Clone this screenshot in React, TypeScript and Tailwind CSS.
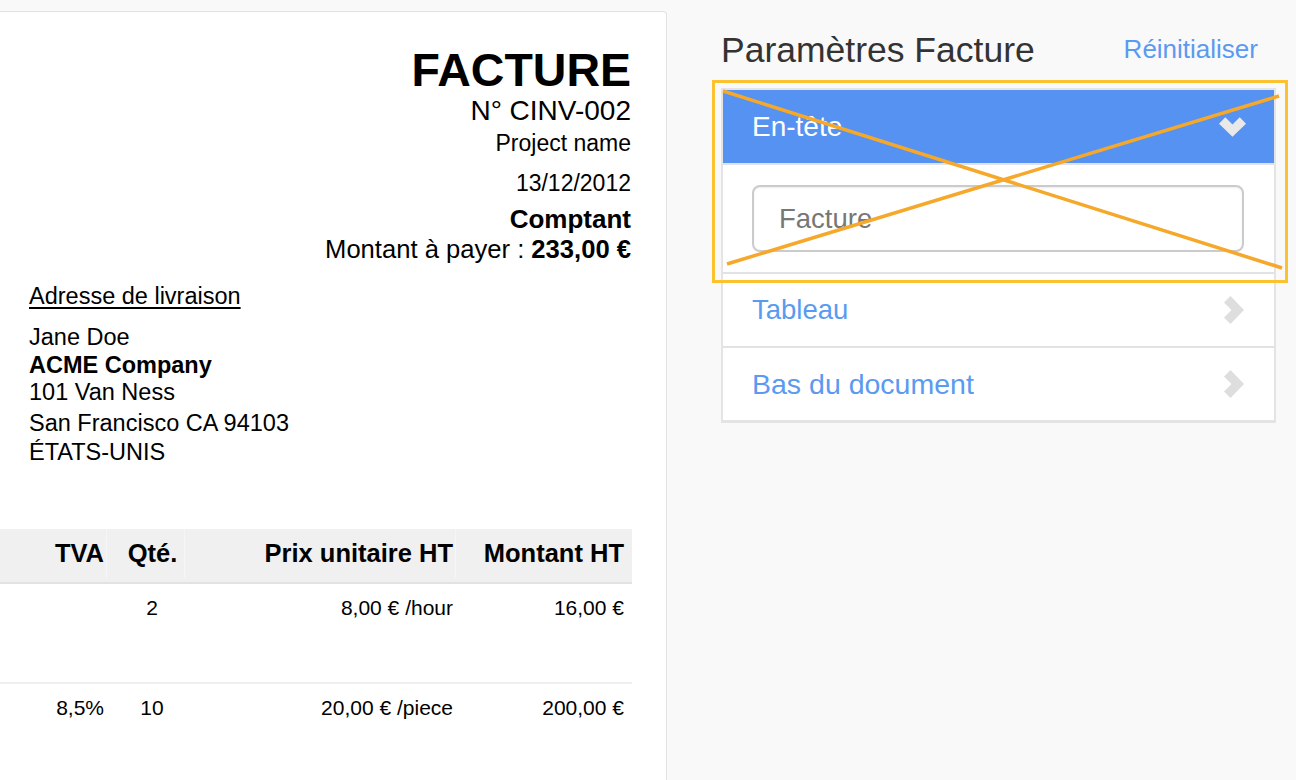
import React from 'react';

const font = { fontFamily: '"Liberation Sans", Arial, Helvetica, sans-serif' };

function ChevronDown({ className }: { className?: string }) {
  return (
    <svg viewBox="0 0 28 20" className={className} aria-hidden>
      <path d="M0 6.5 L6.5 0 L14 7.5 L21.5 0 L28 6.5 L14 20 Z" fill="currentColor" />
    </svg>
  );
}

function ChevronRight({ className }: { className?: string }) {
  return (
    <svg viewBox="0 0 20 28" className={className} aria-hidden>
      <path d="M6.5 0 L20 14 L6.5 28 L0 21.5 L7.5 14 L0 6.5 Z" fill="currentColor" />
    </svg>
  );
}

const rows = [
  { tva: '', qty: '2', price: '8,00 € /hour', total: '16,00 €' },
  { tva: '8,5%', qty: '10', price: '20,00 € /piece', total: '200,00 €' },
];

function InvoicePaper() {
  return (
    <div className="h-[769px] w-[667px] shrink-0 mt-[11px] rounded-tr-[4px] border-t border-r border-[#e2e2e2] bg-white text-black">
      {/* en-tête de la facture */}
      <div className="flex flex-col items-end pr-[35px] pt-[35px]">
        <div className="text-[46.5px] font-bold leading-[46px]">FACTURE</div>
        <div className="mt-[4px] text-[28px] leading-[27px]">N° CINV-002</div>
        <div className="mt-[7px] text-[23px] leading-[24px]">Project name</div>
        <div className="mt-[16px] text-[23px] leading-[24px]">13/12/2012</div>
        <div className="mt-[10px] text-[26px] font-bold leading-[28px]">Comptant</div>
        <div className="mt-[2px] text-[25.6px] leading-[28px]">
          Montant à payer : <span className="font-bold">233,00 €</span>
        </div>
      </div>

      {/* adresse */}
      <div className="mt-[20px] pl-[29px] text-[23.5px]">
        <div className="leading-[27px] underline decoration-[1.5px] underline-offset-[3px]">
          Adresse de livraison
        </div>
        <div className="mt-[14px] leading-[27.5px]">
          <div>Jane Doe</div>
          <div className="font-bold">ACME Company</div>
          <div>101 Van Ness</div>
          <div className="mt-[3px]">San Francisco CA 94103</div>
          <div className="mt-[2px]">ÉTATS-UNIS</div>
        </div>
      </div>

      {/* tableau des lignes */}
      <div className="mt-[62px] w-[632px]">
        <div className="grid h-[55px] grid-cols-[106px_78px_271px_177px] border-b-2 border-[#e2e2e2] bg-[#f0f0f0] pb-[4px] text-[25.5px] font-bold">
          <div className="flex items-center justify-end pr-[2px]">TVA</div>
          <div className="flex items-center justify-center border-l border-[#f6f6f6] pl-[14px]">Qté.</div>
          <div className="flex items-center justify-end border-l border-[#f6f6f6] pr-[2px]">Prix unitaire HT</div>
          <div className="flex items-center justify-end border-l border-[#f6f6f6] pr-[8px]">Montant HT</div>
        </div>
        {rows.map((r, i) => (
          <div
            key={i}
            className={
              'grid grid-cols-[106px_78px_271px_177px] pt-[12px] text-[21px] leading-[24px] ' +
              (i === 0 ? 'h-[100px] border-b-2 border-[#efefef]' : 'h-[100px]')
            }
          >
            <div className="text-right pr-[2px]">{r.tva}</div>
            <div className="text-center pl-[14px]">{r.qty}</div>
            <div className="text-right pr-[2px]">{r.price}</div>
            <div className="text-right pr-[8px]">{r.total}</div>
          </div>
        ))}
      </div>
    </div>
  );
}

function SettingsPanel() {
  return (
    <div className="ml-[54px] w-[555px] shrink-0">
      <div className="flex items-center justify-between pt-[30px] pr-[18px]">
        <h1 className="text-[35.5px] leading-[40px] text-[#333]">Paramètres Facture</h1>
        <a className="mb-[3px] text-[26px] leading-[30px] text-[#5a9af0]">Réinitialiser</a>
      </div>

      <div className="mt-[18px] border-2 border-b-[3px] border-[#e4e4e4] bg-white">
        <div className="flex h-[73px] items-center justify-between bg-[#5592f1] pl-[29px] pr-[28px]">
          <span className="text-[28px] text-white">En-tête</span>
          <ChevronDown className="h-[20px] w-[27px] text-[#e9e9e9]" />
        </div>
        <div className="border-t-2 border-[#e2e2e2] px-[29px] pt-[20px] pb-[20px] pr-[30px]">
          <input
            placeholder="Facture"
            className="h-[67px] w-full rounded-[8px] border-2 border-[#cbcbcb] pl-[25px] text-[27.5px] shadow-[inset_0_1px_2px_rgba(0,0,0,0.08)] outline-none placeholder:text-[#777]"
            style={font}
          />
        </div>
        <div className="flex h-[74px] items-center justify-between border-t-2 border-[#e2e2e2] pl-[29px] pr-[30px]">
          <span className="text-[27.5px] text-[#5a9af0]">Tableau</span>
          <ChevronRight className="h-[28px] w-[20px] text-[#dedede]" />
        </div>
        <div className="flex h-[74px] items-center justify-between border-t-2 border-[#e2e2e2] pl-[29px] pr-[30px]">
          <span className="text-[28.5px] text-[#5a9af0]">Bas du document</span>
          <ChevronRight className="h-[28px] w-[20px] text-[#dedede]" />
        </div>
      </div>
    </div>
  );
}

export default function App() {
  return (
    <div className="relative h-[780px] w-[1296px] overflow-hidden bg-[#f9f9f9]" style={font}>
      <div className="flex">
        <InvoicePaper />
        <SettingsPanel />
      </div>

      {/* annotation : cadre jaune barré */}
      <svg className="pointer-events-none absolute inset-0" width="1296" height="780" aria-hidden>
        <rect x="713.5" y="81.5" width="573" height="200" fill="none" stroke="#fcc12e" strokeWidth="3" />
        <line x1="723" y1="91" x2="1282" y2="268" stroke="#f6a82a" strokeWidth="3.5" />
        <line x1="727" y1="264" x2="1279" y2="96" stroke="#f6a82a" strokeWidth="3.5" />
      </svg>
    </div>
  );
}
